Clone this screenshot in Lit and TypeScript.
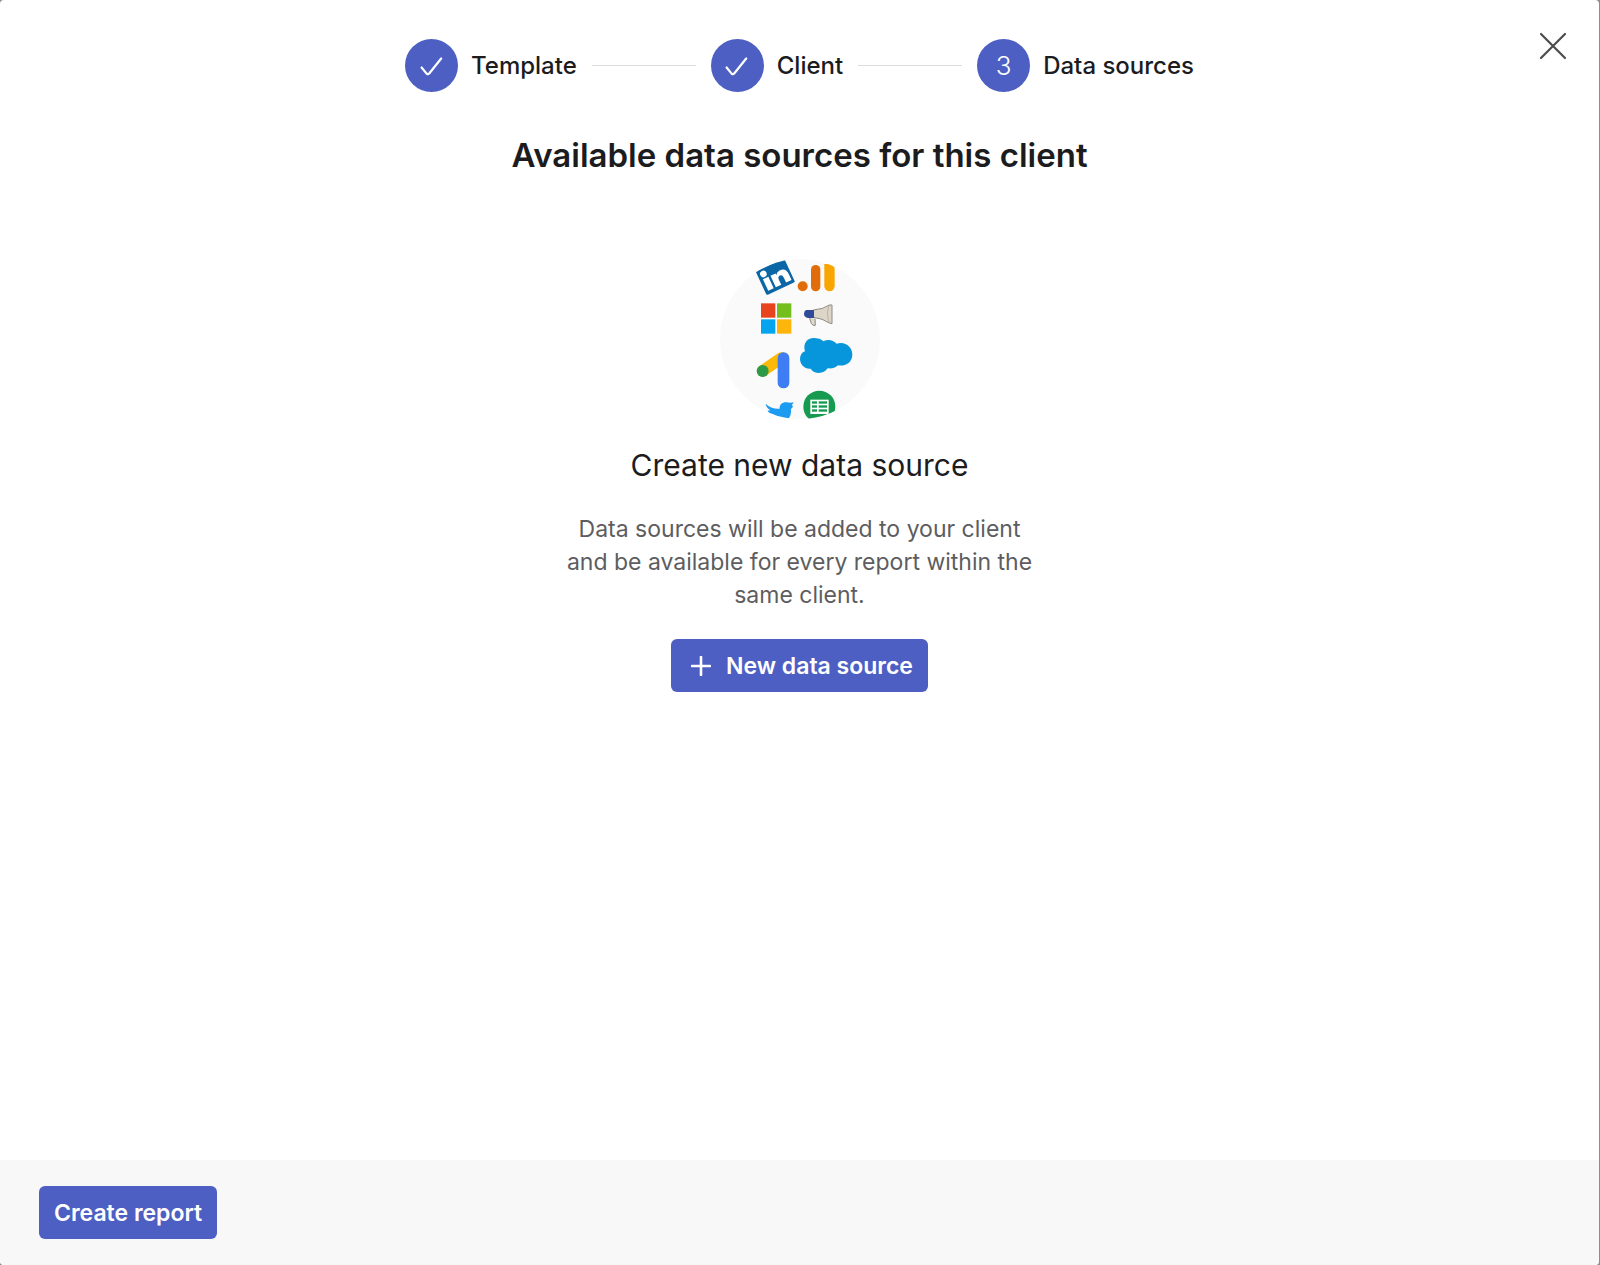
import { LitElement, html, css, svg, nothing } from "lit";
import { customElement, property } from "lit/decorators.js";

interface Step {
  label: string;
  done: boolean;
}

@customElement("step-item")
class StepItem extends LitElement {
  @property({ type: Number }) number = 1;
  @property({ type: Boolean }) done = false;
  @property() label = "";

  static styles = css`
    :host {
      display: flex;
      align-items: center;
      gap: 13px;
    }
    .badge {
      display: grid;
      place-items: center;
      width: 53px;
      height: 53px;
      border-radius: 50%;
      background: #4d5fc3;
      color: #fff;
      font-size: 26px;
      font-weight: 300;
      line-height: 33px;
    }
    .label {
      color: #1c1c1e;
      font-size: 24px;
      font-weight: 500;
      line-height: 33px;
      white-space: nowrap;
    }
  `;

  render() {
    return html`
      <span class="badge">
        ${this.done
          ? html`<svg width="26" height="26" viewBox="0 0 26 26" fill="none" stroke="#fff" stroke-width="2.2" stroke-linecap="round" stroke-linejoin="round" aria-hidden="true">
              <path d="M2.6 14.5 L7.6 20.6 Q9 21.8 10.4 20.2 L22.2 5.5" />
            </svg>`
          : this.number}
      </span>
      <span class="label">${this.label}</span>
    `;
  }
}

@customElement("source-logos")
class SourceLogos extends LitElement {
  static styles = css`
    :host {
      display: block;
    }
    .logos {
      display: block;
      width: 160px;
      height: 160px;
    }
  `;

  render() {
    return html`
      <svg class="logos" viewBox="60 57 480 480" aria-hidden="true">
        <defs>
          <clipPath id="disc"><circle cx="300" cy="297" r="240" /></clipPath>
        </defs>
        <circle cx="300" cy="297" r="240" fill="#fafafa" />
        <g clip-path="url(#disc)">${this.linkedin()}${this.marks()}</g>
      </svg>
    `;
  }

  private linkedin() {
    return svg`
      <g transform="translate(227 110) rotate(-25)">
        <rect x="-48" y="-39" width="94" height="78" rx="4" fill="#0b66a5" />
        <g fill="#fff">
          <rect x="-38" y="-9" width="18" height="38" />
          <circle cx="-30" cy="-23" r="10" />
          <path d="M-13 -9 H4 V-3 Q9 -12 20 -12 Q39 -12 39 11 V29 H21 V13 Q21 2 13 2 Q5 2 5 13 V29 H-13 Z" />
        </g>
      </g>
    `;
  }

  private marks() {
    return svg`
      <circle cx="308" cy="139" r="15" fill="#e06c0a" />
      <rect x="333" y="75" width="28" height="79" rx="14" fill="#e06c0a" />
      <path d="M373 72 L394 72 Q404 76 404 90 V139 Q402 154 388 154 Q374 153 373 139 Z" fill="#f9a602" />

      <rect x="183" y="190" width="43" height="43" fill="#e8431f" />
      <rect x="231" y="190" width="43" height="43" fill="#74bf1e" />
      <rect x="183" y="238" width="43" height="43" fill="#05a4ef" />
      <rect x="231" y="238" width="43" height="43" fill="#fdb40b" />

      <path d="M328 232 L334 250 Q338 259 346 256 L345 236" fill="#ded9ce" stroke="#8b8880" stroke-width="3" />
      <path d="M340 210 Q370 208 388 195 L396 195 V251 L388 249 Q368 235 340 232 Z" fill="#ddd6c8" stroke="#8d8981" stroke-width="3" />
      <path d="M387 196 Q378 222 388 249" fill="none" stroke="#a8a197" stroke-width="2" />
      <path d="M318 210 H342 V234 H324 Q312 231 312 222 Q312 213 318 210 Z" fill="#2e4a98" />

      <path d="M315 334 C308 310 322 294 341 294 C354 294 363 297 370 304 C384 296 400 300 410 311 C434 302 458 320 457 345 C456 369 434 380 414 376 C404 386 393 386 383 385 C372 403 343 404 332 386 C314 388 300 373 300 357 C300 345 306 337 315 334 Z" fill="#0796dc" />

      <path d="M188 393 L244 354" stroke="#fbb90a" stroke-width="35" stroke-linecap="round" />
      <circle cx="188" cy="393" r="18" fill="#2d9a48" />
      <rect x="233" y="337" width="35" height="108" rx="17" fill="#3f7df4" />

      <path d="M197 491 C208 502 222 507 239 506 C238 494 247 486 259 487 L272 488 L281 487 L276 495 L279 500 L273 507 C274 524 270 537 257 540 H240 L220 523 C211 521 205 517 203 512 L211 511 C203 506 198 500 197 491 Z" fill="#1d9bf0" />

      <circle cx="358" cy="500" r="48" fill="#159a50" />
      <rect x="331" y="479" width="55" height="43" fill="#fff" />
      <g fill="#159a50">
        <rect x="336" y="484" width="15" height="7" />
        <rect x="356" y="484" width="25" height="7" />
        <rect x="336" y="496" width="15" height="7" />
        <rect x="356" y="496" width="25" height="7" />
        <rect x="336" y="508" width="15" height="7" />
        <rect x="356" y="508" width="25" height="7" />
      </g>
    `;
  }
}

@customElement("app-root")
class AppRoot extends LitElement {
  private steps: Step[] = [
    { label: "Template", done: true },
    { label: "Client", done: true },
    { label: "Data sources", done: false },
  ];

  static styles = css`
    :host {
      display: block;
      background: #8d8d8d;
      font-family: Inter, "Liberation Sans", sans-serif;
    }
    .dialog {
      box-sizing: border-box;
      display: flex;
      flex-direction: column;
      min-height: 100vh;
      margin-right: 1px;
      border-radius: 4px;
      overflow: hidden;
      background: #fff;
      position: relative;
    }
    .close {
      position: absolute;
      top: 26px;
      right: 26px;
      display: grid;
      place-items: center;
      width: 40px;
      height: 40px;
      padding: 0;
      border: 0;
      background: none;
      cursor: pointer;
    }
    .steps {
      display: flex;
      justify-content: center;
      align-items: center;
      gap: 15px;
      padding-top: 39px;
    }
    .line {
      width: 104px;
      height: 1px;
      background: #dcdcdc;
    }
    .content {
      flex: 1;
      display: flex;
      flex-direction: column;
      align-items: center;
      text-align: center;
    }
    .title {
      margin: 40px 0 81px;
      color: #1c1c1e;
      font-size: 33px;
      font-weight: 600;
      line-height: 46px;
    }
    .subtitle {
      margin: 23px 0 25px;
      color: #1c1c1e;
      font-size: 30px;
      font-weight: 400;
      line-height: 46px;
    }
    .text {
      max-width: 480px;
      margin: 0 0 27px;
      color: #5d5d5f;
      font-size: 23px;
      line-height: 33px;
    }
    .button {
      display: flex;
      align-items: center;
      gap: 15px;
      height: 53px;
      padding: 0 15px;
      border: 0;
      border-radius: 6px;
      background: #4d5fc3;
      color: #fff;
      font-family: inherit;
      font-size: 23px;
      font-weight: 600;
      cursor: pointer;
    }
    .button.with-icon {
      padding-left: 20px;
    }
    .footer {
      display: flex;
      padding: 26px 39px;
      background: #f8f8f8;
    }
  `;

  render() {
    return html`
      <main class="dialog">
        <button class="close" aria-label="Close">
          <svg width="28" height="28" viewBox="0 0 28 28" stroke="#4c4c4e" stroke-width="2.2" stroke-linecap="round" aria-hidden="true">
            <path d="M2 2 L26 26 M26 2 L2 26" />
          </svg>
        </button>
        <div class="steps">
          ${this.steps.map(
            (step, i) => html`
              ${i > 0 ? html`<span class="line"></span>` : nothing}
              <step-item .number=${i + 1} .label=${step.label} .done=${step.done}></step-item>
            `,
          )}
        </div>
        <section class="content">
          <h1 class="title">Available data sources for this client</h1>
          <source-logos></source-logos>
          <h2 class="subtitle">Create new data source</h2>
          <p class="text">
            Data sources will be added to your client and be available for every report within the same client.
          </p>
          <button class="button with-icon">
            <svg width="20" height="20" viewBox="0 0 20 20" stroke="#fff" stroke-width="2.6" stroke-linecap="round" aria-hidden="true">
              <path d="M10 1 V19 M1 10 H19" />
            </svg>
            New data source
          </button>
        </section>
        <footer class="footer">
          <button class="button">Create report</button>
        </footer>
      </main>
    `;
  }
}
